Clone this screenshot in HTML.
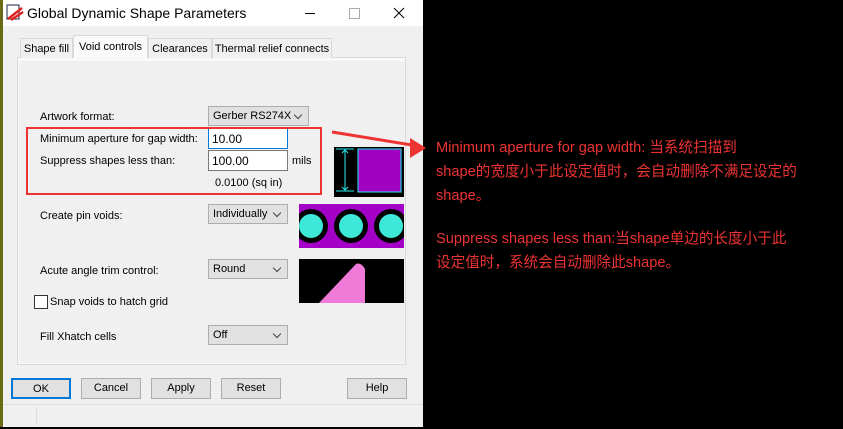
<!DOCTYPE html>
<html><head><style>
body{margin:0;width:843px;height:429px;background:#000;position:relative;overflow:hidden;font-family:"Liberation Sans",sans-serif;font-size:11px;color:#000}
.a{position:absolute;white-space:nowrap}
.dlg{left:3px;top:0;width:420px;height:427px;background:#f0f0f0}
.sel{background:#e1e1e1;border:1px solid #adadad;height:20px;box-sizing:border-box;padding:3px 4px;font-size:11px}
.sel:after{content:"";position:absolute;right:7px;top:5px;width:5px;height:5px;border-right:1px solid #444;border-bottom:1px solid #444;transform:rotate(45deg)}
.btn{background:#e1e1e1;border:1px solid #adadad;height:21px;width:60px;box-sizing:border-box;text-align:center;line-height:19px}
.tab{top:38px;height:20px;border:1px solid #d9d9d9;border-bottom:none;background:#f0f0f0;line-height:20px;text-align:center;box-sizing:border-box}
.inp{background:#fff;border:1px solid #7a7a7a;height:21px;box-sizing:border-box;padding:3px 3px;font-size:12px}
.r{color:#ee3333;font-size:14.6px;font-family:"Liberation Sans","Noto Sans CJK SC",sans-serif}
</style></head><body>
<div class="a" style="left:0;top:0;width:3px;height:427px;background:#6b6a14"></div>
<div class="a dlg"></div>
<div class="a" style="left:3px;top:0;width:420px;height:26px;background:#fff"></div>
<svg class="a" style="left:6px;top:4px" width="18" height="18"><rect x="1" y="1" width="12" height="14" fill="#fff" stroke="#224" /><path d="M2 15 L16 4 M5 16 L17 8" stroke="#d22" stroke-width="2.5"/></svg>
<div class="a" style="left:27px;top:5px;font-size:14px">Global Dynamic Shape Parameters</div>
<div class="a" style="left:305px;top:13px;width:10px;height:1px;background:#000"></div>
<div class="a" style="left:349px;top:8px;width:9px;height:9px;border:1px solid #aaa"></div>
<svg class="a" style="left:393px;top:7px" width="12" height="12"><path d="M1 1L11 11M11 1L1 11" stroke="#000"/></svg>
<div class="a" style="left:17px;top:57px;width:389px;height:308px;background:#f9f9f9;border:1px solid #d9d9d9;box-sizing:border-box"></div>
<div class="a" style="left:19px;top:61px;width:386px;height:302px;background:#f0f0f0"></div>
<div class="a tab" style="left:20px;width:53px">Shape fill</div>
<div class="a tab" style="left:73px;top:35px;height:23px;width:75px;background:#f9f9f9;line-height:22px;border-color:#d9d9d9">Void controls</div>
<div class="a tab" style="left:148px;width:64px">Clearances</div>
<div class="a tab" style="left:212px;width:120px">Thermal relief connects</div>
<div class="a" style="left:40px;top:111px">Artwork format:</div>
<div class="a sel" style="left:208px;top:106px;width:101px">Gerber RS274X</div>
<div class="a" style="left:40px;top:133px">Minimum aperture for gap width:</div>
<div class="a inp" style="left:208px;top:128px;width:80px;border-color:#0078d7">10.00</div>
<div class="a" style="left:40px;top:155px">Suppress shapes less than:</div>
<div class="a inp" style="left:208px;top:150px;width:80px">100.00</div>
<div class="a" style="left:292px;top:155px">mils</div>
<div class="a" style="left:215px;top:177px">0.0100 (sq in)</div>
<div class="a" style="left:26px;top:127px;width:296px;height:68px;border:2px solid #ee3333;box-sizing:border-box"></div>
<svg class="a" style="left:334px;top:147px" width="70" height="50"><rect width="70" height="50" fill="#000"/><rect x="24" y="2" width="43" height="43" fill="#a000c0" stroke="#2ee" /><path d="M2 2H20M2 44H20M11 3V43M8 6L11 3L14 6M8 40L11 43L14 40" stroke="#2ee" fill="none"/></svg>
<div class="a" style="left:40px;top:210px">Create pin voids:</div>
<div class="a sel" style="left:208px;top:204px;width:80px">Individually</div>
<svg class="a" style="left:299px;top:204px" width="105" height="44"><rect width="105" height="44" fill="#a300c8"/><circle cx="12" cy="22" r="17" fill="#000"/><circle cx="12" cy="22" r="12" fill="#3ee8d8"/><circle cx="52" cy="22" r="17" fill="#000"/><circle cx="52" cy="22" r="12" fill="#3ee8d8"/><circle cx="92" cy="22" r="17" fill="#000"/><circle cx="92" cy="22" r="12" fill="#3ee8d8"/></svg>
<div class="a" style="left:40px;top:265px">Acute angle trim control:</div>
<div class="a sel" style="left:208px;top:259px;width:80px">Round</div>
<svg class="a" style="left:299px;top:259px" width="105" height="44"><rect width="105" height="44" fill="#000"/><path d="M20 44L57 5Q62 3 66 10V44Z" fill="#f07ad8"/></svg>
<div class="a" style="left:34px;top:295px;width:12px;height:12px;background:#fff;border:1px solid #333"></div>
<div class="a" style="left:50px;top:296px">Snap voids to hatch grid</div>
<div class="a" style="left:40px;top:331px">Fill Xhatch cells</div>
<div class="a sel" style="left:208px;top:325px;width:80px">Off</div>
<div class="a btn" style="left:11px;top:378px;border:2px solid #0078d7">OK</div>
<div class="a btn" style="left:81px;top:378px">Cancel</div>
<div class="a btn" style="left:151px;top:378px">Apply</div>
<div class="a btn" style="left:221px;top:378px">Reset</div>
<div class="a btn" style="left:347px;top:378px">Help</div>
<div class="a" style="left:3px;top:404px;width:420px;height:1px;background:#ddd"></div>
<div class="a" style="left:36px;top:407px;width:1px;height:18px;background:#ddd"></div>
<svg class="a" style="left:330px;top:128px" width="100" height="30"><path d="M2 4L88 18" stroke="#ee3333" stroke-width="3"/><path d="M96 20L80 10L80 30Z" fill="#ee3333"/></svg>
<div class="a r" style="left:436px;top:136px;line-height:24px">Minimum aperture for gap width: 当系统扫描到<br>shape的宽度小于此设定值时，会自动删除不满足设定的<br>shape。</div>
<div class="a r" style="left:436px;top:227px;line-height:24px">Suppress shapes less than:当shape单边的长度小于此<br>设定值时，系统会自动删除此shape。</div>
</body></html>
